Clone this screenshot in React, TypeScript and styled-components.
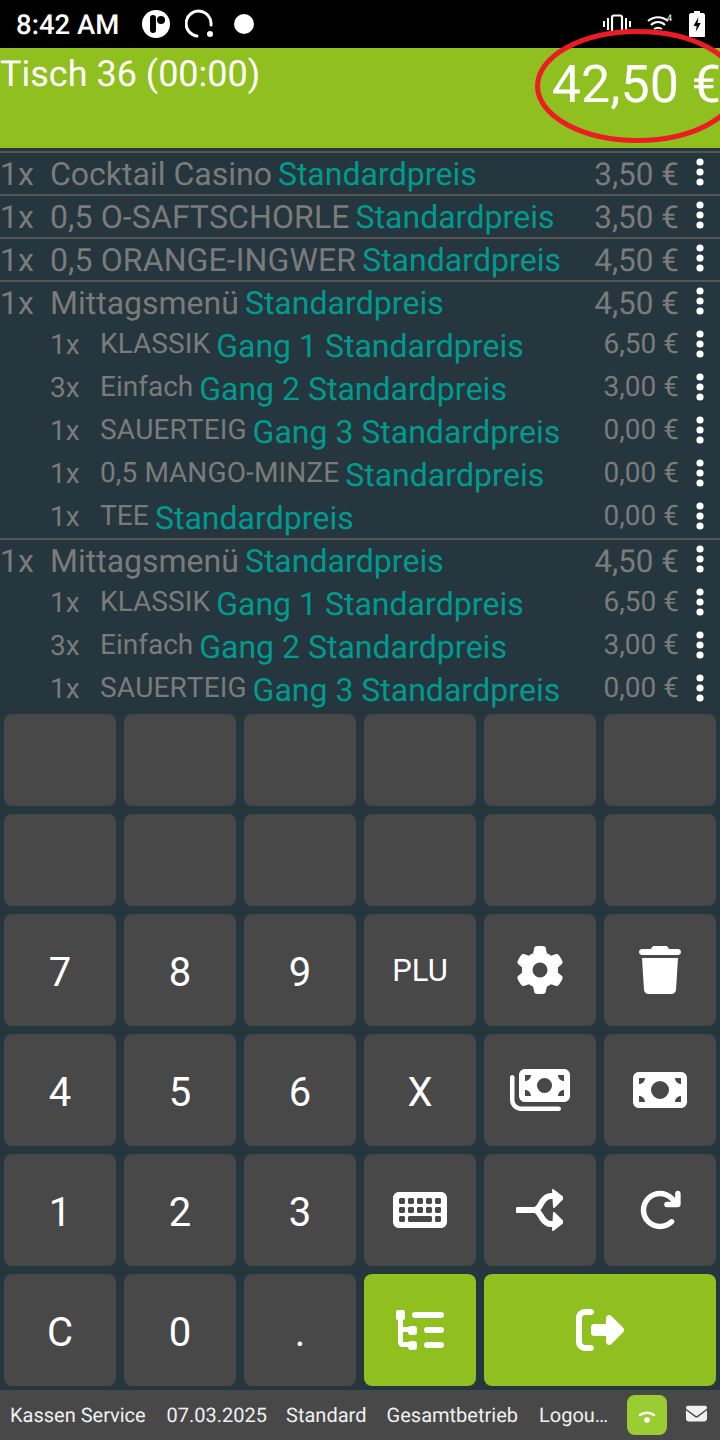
import React from 'react';
import styled, { createGlobalStyle } from 'styled-components';
import {
  FaGear,
  FaTrash,
  FaMoneyBills,
  FaMoneyBill,
  FaKeyboard,
  FaArrowRotateRight,
  FaRightFromBracket,
  FaEnvelope,
} from 'react-icons/fa6';

const GREEN = '#90c020';
const TEAL = '#009a90';
const GREY = '#7b7b7b';
const PANEL = '#25363e';
const BUTTON = '#484848';

const GlobalStyle = createGlobalStyle`
  html, body {
    margin: 0;
    padding: 0;
    background: ${PANEL};
    font-family: Roboto, "Liberation Sans", sans-serif;
    text-rendering: geometricPrecision;
    font-kerning: none;
  }
  * {
    box-sizing: border-box;
  }
`;

const Page = styled.div`
  position: relative;
  width: 720px;
  height: 1440px;
  display: flex;
  flex-direction: column;
  overflow: hidden;
  background: ${PANEL};
`;

const StatusBar = styled.div`
  height: 48px;
  flex: none;
  background: #000;
  color: #fff;
  display: flex;
  align-items: center;
  padding: 0 15px 0 16px;
`;

const Clock = styled.span`
  font-size: 27.5px;
  font-weight: 500;
  margin-right: 23px;
`;

const StatusLeft = styled.div`
  display: flex;
  align-items: center;
  gap: 15px;
  flex: 1;
`;

const StatusRight = styled.div`
  display: flex;
  align-items: center;
  gap: 16px;
`;

const Header = styled.div`
  height: 100px;
  flex: none;
  background: ${GREEN};
  color: #fff;
  display: flex;
  justify-content: space-between;
  align-items: flex-start;
`;

const TableName = styled.div`
  font-size: 36px;
  line-height: 52px;
`;

const Total = styled.div`
  font-size: 52px;
  line-height: 72px;
  white-space: nowrap;
  margin-top: 1px;
  margin-right: -1px;
`;

const TotalMark = styled.svg`
  position: absolute;
  left: 530px;
  top: 24px;
  width: 190px;
  height: 126px;
`;

const OrderList = styled.div`
  height: 562px;
  flex: none;
  overflow: hidden;
  padding-top: 3px;
`;

const Row = styled.div<{ $main?: boolean }>`
  height: 43px;
  display: flex;
  align-items: center;
  white-space: nowrap;
  padding-left: ${(p) => (p.$main ? 0 : 50)}px;
  padding-top: ${(p) => (p.$main ? 0 : 2)}px;
  border-top: ${(p) => (p.$main ? '2px solid #555' : 'none')};
`;

const Qty = styled.span<{ $sub?: boolean }>`
  width: 50px;
  flex: none;
  color: ${GREY};
  font-size: ${(p) => (p.$sub ? 28 : 32)}px;
  position: relative;
  top: ${(p) => (p.$sub ? -1 : 0)}px;
`;

const Name = styled.span<{ $sub?: boolean; $caps?: boolean }>`
  color: ${GREY};
  font-size: ${(p) => (p.$sub ? 28 : 32)}px;
  letter-spacing: ${(p) => (p.$caps ? 0.12 : 0)}px;
  margin-right: 6px;
  position: relative;
  top: ${(p) => (p.$sub ? -2 : 0)}px;
`;

const Variant = styled.span`
  color: ${TEAL};
  font-size: 32px;
  flex: 1;
`;

const Price = styled.span<{ $sub?: boolean }>`
  color: ${GREY};
  font-size: ${(p) => (p.$sub ? 28 : 31.5)}px;
  position: relative;
  top: ${(p) => (p.$sub ? -2 : 1)}px;
`;

const Dots = styled.svg`
  width: 10px;
  height: 30px;
  margin: 0 15px 4px 16px;
  flex: none;
`;

const Pad = styled.div`
  flex: 1;
  display: grid;
  grid-template-columns: repeat(6, 112px);
  grid-template-rows: 92px 92px repeat(4, 112px);
  gap: 8px;
  padding: 4px;
`;

const Key = styled.button<{ $accent?: boolean; $wide?: boolean; $small?: boolean; $icon?: boolean }>`
  border: none;
  padding: ${(p) => (p.$icon || p.$small ? 0 : '4px 0 0')};
  border-radius: 8px;
  background: ${(p) => (p.$accent ? GREEN : BUTTON)};
  color: #fff;
  font-family: inherit;
  font-size: ${(p) => (p.$small ? 31 : 40)}px;
  grid-column: ${(p) => (p.$wide ? 'span 2' : 'auto')};
  display: flex;
  align-items: center;
  justify-content: center;
`;

const Footer = styled.div`
  height: 50px;
  flex: none;
  background: ${BUTTON};
  color: #f0f0f0;
  display: flex;
  align-items: center;
  font-size: 20px;
  padding-left: 10px;
`;

const FooterItem = styled.span<{ $gap: number }>`
  margin-right: ${(p) => p.$gap}px;
  white-space: nowrap;
`;

const Online = styled.div`
  width: 40px;
  height: 40px;
  border-radius: 8px;
  background: #9acd32;
  display: flex;
  align-items: center;
  justify-content: center;
  margin-left: 19px;
`;

const Mail = styled.div`
  display: flex;
  margin-left: 19px;
  margin-top: -3px;
`;

type Item = { qty: string; name: string; variant: string; price: string; main: boolean };

const items: Item[] = [
  { qty: '1x', name: 'Cocktail Casino', variant: 'Standardpreis', price: '3,50 €', main: true },
  { qty: '1x', name: '0,5 O-SAFTSCHORLE', variant: 'Standardpreis', price: '3,50 €', main: true },
  { qty: '1x', name: '0,5 ORANGE-INGWER', variant: 'Standardpreis', price: '4,50 €', main: true },
  { qty: '1x', name: 'Mittagsmenü', variant: 'Standardpreis', price: '4,50 €', main: true },
  { qty: '1x', name: 'KLASSIK', variant: 'Gang 1 Standardpreis', price: '6,50 €', main: false },
  { qty: '3x', name: 'Einfach', variant: 'Gang 2 Standardpreis', price: '3,00 €', main: false },
  { qty: '1x', name: 'SAUERTEIG', variant: 'Gang 3 Standardpreis', price: '0,00 €', main: false },
  { qty: '1x', name: '0,5 MANGO-MINZE', variant: 'Standardpreis', price: '0,00 €', main: false },
  { qty: '1x', name: 'TEE', variant: 'Standardpreis', price: '0,00 €', main: false },
  { qty: '1x', name: 'Mittagsmenü', variant: 'Standardpreis', price: '4,50 €', main: true },
  { qty: '1x', name: 'KLASSIK', variant: 'Gang 1 Standardpreis', price: '6,50 €', main: false },
  { qty: '3x', name: 'Einfach', variant: 'Gang 2 Standardpreis', price: '3,00 €', main: false },
  { qty: '1x', name: 'SAUERTEIG', variant: 'Gang 3 Standardpreis', price: '0,00 €', main: false },
];

const KebabIcon = () => (
  <Dots viewBox="0 0 10 30">
    <circle cx="5" cy="5" r="3.6" fill="#fff" />
    <circle cx="5" cy="15" r="3.6" fill="#fff" />
    <circle cx="5" cy="25" r="3.6" fill="#fff" />
  </Dots>
);

const SplitIcon = () => (
  <svg width="48" height="44" viewBox="0 0 48 44" fill="none">
    <path d="M2 22h16c4 0 5-3 8-8 2-3 5-6 9-6h3M18 22c4 0 5 3 8 8 2 3 5 6 9 6h3" stroke="#fff" strokeWidth="6" strokeLinecap="round" />
    <path
      d="M37 2l9 7v2l-8 8zM37 42l9-7v-2l-8-8z"
      fill="#fff"
      stroke="#fff"
      strokeWidth="2"
      strokeLinejoin="round"
    />
  </svg>
);

const TreeIcon = () => (
  <svg width="48" height="44" viewBox="0 0 48 44" fill="#fff">
    <rect x="0" y="2" width="9" height="10" rx="2" />
    <path d="M2 8h5v27H2z" />
    <path d="M2 19h11v5H2zM7 39h6v-5H7V31H2v3c0 3 2 5 5 5z" />
    <rect x="12" y="18" width="9" height="9" rx="3" />
    <rect x="12" y="33" width="9" height="9" rx="3" />
    <rect x="16" y="4" width="32" height="6" rx="3" />
    <rect x="28" y="19" width="20" height="6" rx="3" />
    <rect x="28" y="34" width="20" height="6" rx="3" />
  </svg>
);

const WifiSmallIcon = () => (
  <svg width="18" height="18" viewBox="0 0 18 18" fill="none">
    <path d="M2 9c4-3 10-3 14 0" stroke="#fff" strokeWidth="2.600" strokeLinecap="round" />
    <circle cx="9" cy="14" r="2.800" fill="#fff" />
  </svg>
);

export default function App() {
  return (
    <Page>
      <GlobalStyle />
      <StatusBar>
        <Clock>8:42 AM</Clock>
        <StatusLeft>
          <svg width="28" height="28" viewBox="0 0 28 28">
            <circle cx="14" cy="14" r="14" fill="#fff" />
            <rect x="8" y="5" width="6" height="18" rx="3" fill="#000" />
            <circle cx="19" cy="10" r="4" fill="#000" />
          </svg>
          <svg width="30" height="30" viewBox="0 0 30 30" fill="none">
            <path d="M12 27A12.500 12.500 0 1 1 26 16" stroke="#fff" strokeWidth="3" strokeLinecap="round" />
            <circle cx="25" cy="25" r="3" fill="#fff" />
          </svg>
          <svg width="20" height="20" viewBox="0 0 20 20" style={{ marginLeft: 4 }}>
            <circle cx="10" cy="10" r="10" fill="#fff" />
          </svg>
        </StatusLeft>
        <StatusRight>
          <svg width="28" height="20" viewBox="0 0 28 20" fill="none" stroke="#fff">
            <path d="M1 7v6M5 4v12M23 4v12M27 7v6" strokeWidth="2" />
            <rect x="9" y="1.500" width="10" height="20" rx="2" strokeWidth="2.200" />
          </svg>
          <svg width="26" height="22" viewBox="0 0 26 22" fill="none" stroke="#fff">
            <path d="M1 8c6-5 14-5 20 0M4 12c4-4 10-4 14 0M7 16c3-2 5-2 8 0" strokeWidth="2" />
            <text x="20" y="8" fontSize="9" fill="#fff" stroke="none" fontFamily="Roboto">4</text>
          </svg>
          <svg width="16" height="26" viewBox="0 0 16 26">
            <path d="M5 0h6v2h3c1 0 2 1 2 2v21c0 .6-.4 1-1 1H1c-.6 0-1-.4-1-1V4c0-1 1-2 2-2h3z" fill="#fff" />
            <path d="M9.500 6L4.500 15h3.200l-1 6 5-9H8.500z" fill="#000" />
          </svg>
        </StatusRight>
      </StatusBar>

      <Header>
        <TableName>Tisch 36 (00:00)</TableName>
        <Total>42,50 €</Total>
      </Header>
      <TotalMark viewBox="0 0 190 126">
        <ellipse cx="107.500" cy="62" rx="100" ry="54.500" fill="none" stroke="#ed1c24" strokeWidth="5" />
      </TotalMark>

      <OrderList>
        {items.map((item, i) => (
          <Row key={i} $main={item.main}>
            <Qty $sub={!item.main}>{item.qty}</Qty>
            <Name $sub={!item.main} $caps={item.name === item.name.toUpperCase()}>{item.name}</Name>
            <Variant>{item.variant}</Variant>
            <Price $sub={!item.main}>{item.price}</Price>
            <KebabIcon />
          </Row>
        ))}
      </OrderList>

      <Pad>
        {Array.from({ length: 12 }).map((_, i) => (
          <Key key={i} />
        ))}
        <Key>7</Key>
        <Key>8</Key>
        <Key>9</Key>
        <Key $small>PLU</Key>
        <Key $icon><FaGear size={48} /></Key>
        <Key $icon><FaTrash size={48} /></Key>
        <Key>4</Key>
        <Key>5</Key>
        <Key>6</Key>
        <Key>X</Key>
        <Key $icon><FaMoneyBills size={60} /></Key>
        <Key $icon><FaMoneyBill size={54} /></Key>
        <Key>1</Key>
        <Key>2</Key>
        <Key>3</Key>
        <Key $icon><FaKeyboard size={54} /></Key>
        <Key $icon><SplitIcon /></Key>
        <Key $icon><FaArrowRotateRight size={44} /></Key>
        <Key>C</Key>
        <Key>0</Key>
        <Key>.</Key>
        <Key $accent $icon><TreeIcon /></Key>
        <Key $accent $wide $icon><FaRightFromBracket size={48} /></Key>
      </Pad>

      <Footer>
        <FooterItem $gap={21}>Kassen Service</FooterItem>
        <FooterItem $gap={19}>07.03.2025</FooterItem>
        <FooterItem $gap={20}>Standard</FooterItem>
        <FooterItem $gap={21}>Gesamtbetrieb</FooterItem>
        <FooterItem $gap={0}>Logou…</FooterItem>
        <Online><WifiSmallIcon /></Online>
        <Mail><FaEnvelope size={21} /></Mail>
      </Footer>
    </Page>
  );
}
